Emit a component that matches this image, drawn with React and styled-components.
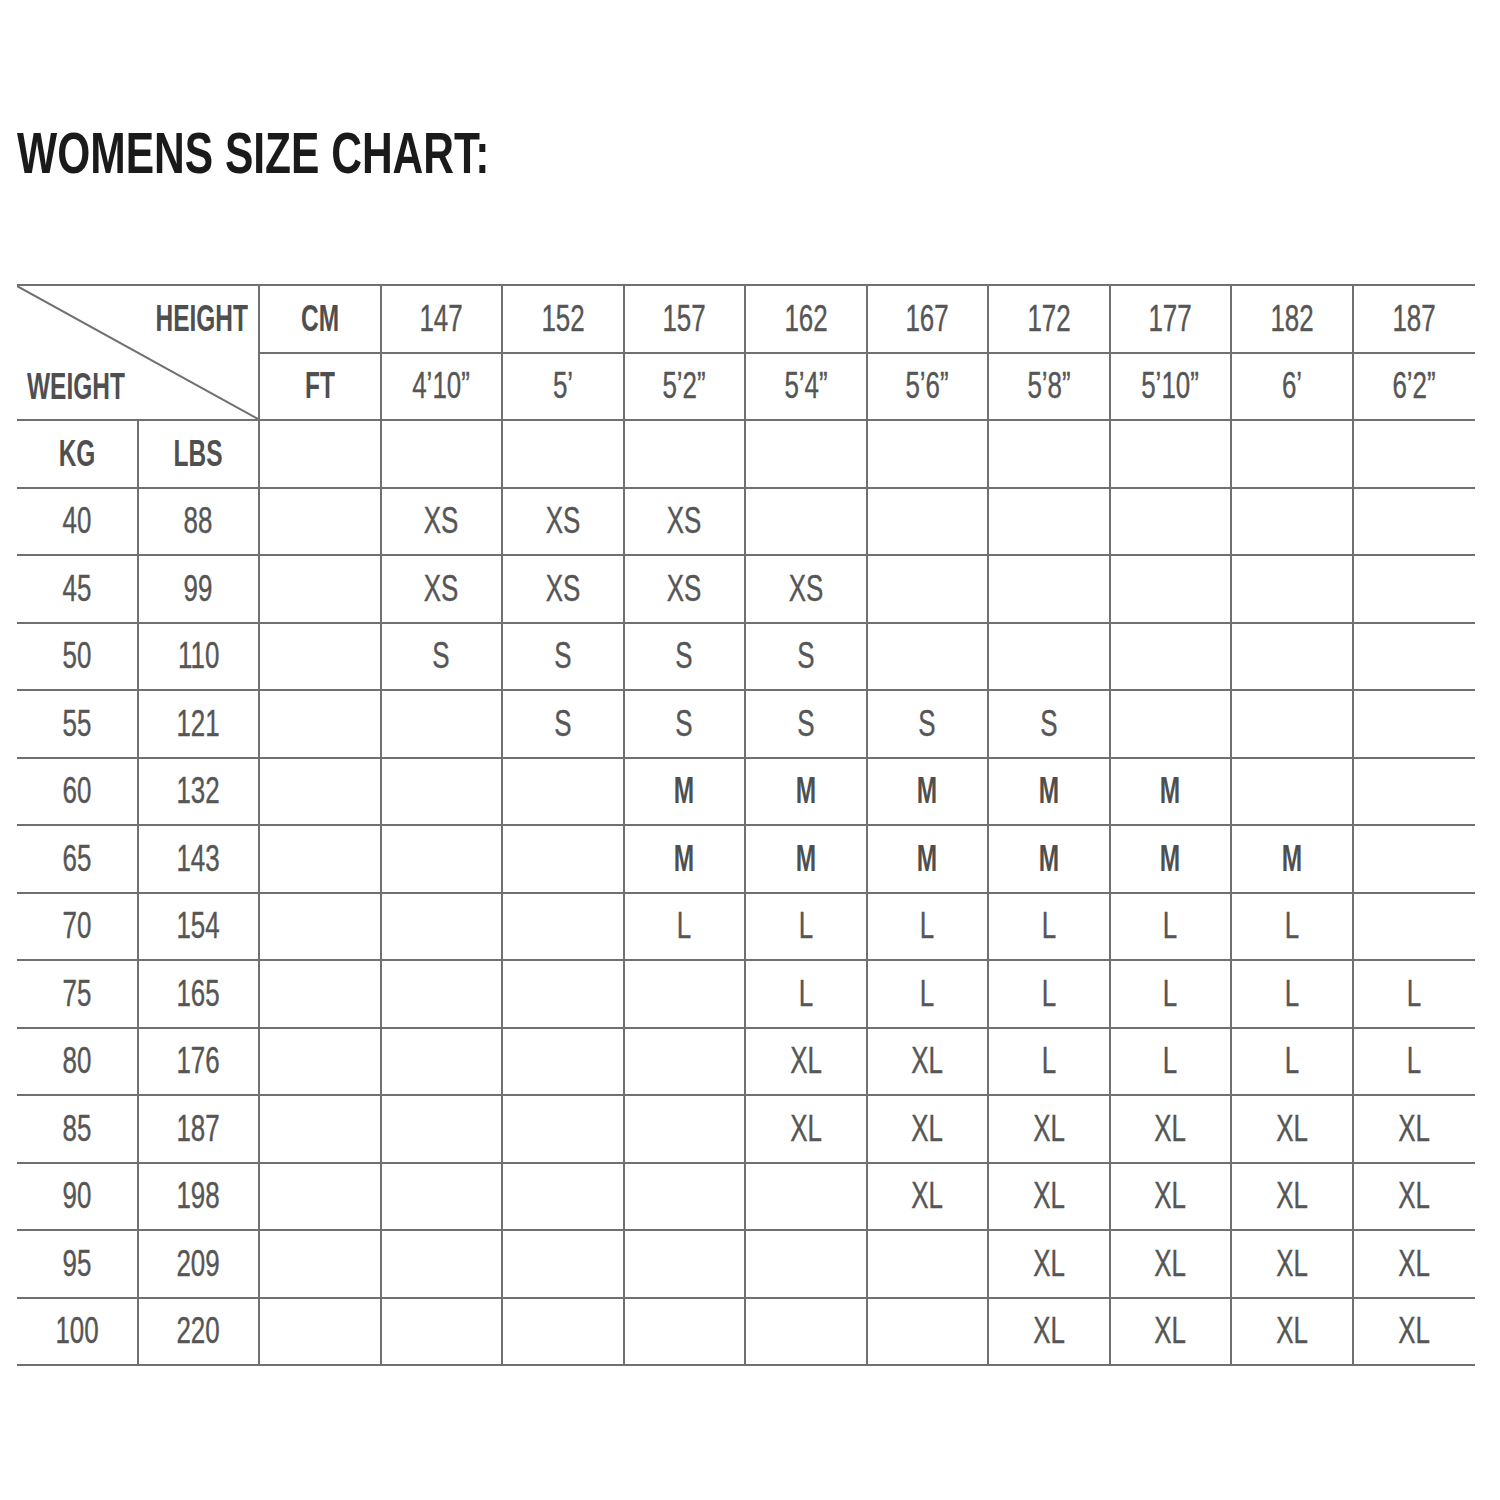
import React from "react"
import styled, { createGlobalStyle } from "styled-components"

const GlobalStyle = createGlobalStyle`
  body {
    margin: 0;
    background: #fff;
  }
`

const LINE = "#707070"

const Page = styled.div`
  padding: 125px 25px 120px 17px;
  font-family: "Liberation Sans", Arial, sans-serif;
  color: #555;
`

const Title = styled.h1`
  margin: 0;
  font-size: 57px;
  line-height: 57px;
  font-weight: 700;
  color: #1a1a1a;
  white-space: nowrap;
  transform: scaleX(0.746);
  transform-origin: left center;
`

const Chart = styled.div`
  margin-top: 102px;
  width: 1458px;
  display: grid;
  grid-template-columns: repeat(12, 1fr);
  grid-auto-rows: 67.5px;
  border-bottom: 2px solid ${LINE};
`

const Cell = styled.div`
  box-sizing: border-box;
  display: flex;
  align-items: center;
  justify-content: center;
  border-top: 2px solid ${LINE};
  border-right: ${props => (props.$last ? "none" : `2px solid ${LINE}`)};
`

const Corner = styled.div`
  position: relative;
  box-sizing: border-box;
  grid-column: span 2;
  grid-row: span 2;
  display: grid;
  grid-template-rows: 1fr 1fr;
  border-top: 2px solid ${LINE};
  border-right: 2px solid ${LINE};
  padding: 0 10px;
`

const Diagonal = styled.svg`
  position: absolute;
  inset: 0;
  width: 100%;
  height: 100%;
`

const Label = styled.span`
  display: inline-block;
  font-size: 36px;
  line-height: 1;
  font-weight: ${props => (props.$bold ? 700 : 400)};
  color: ${props => (props.$bold ? "#4f4f4f" : "#565656")};
  -webkit-text-stroke: ${props => (props.$bold ? "0" : "0.4px #565656")};
  white-space: nowrap;
  transform: scaleX(${props => (props.$bold ? 0.68 : 0.72)});
  transform-origin: ${props => props.$origin || "center"};
`

const CornerLabel = styled.div`
  display: flex;
  align-items: center;
  justify-content: ${props => (props.$end ? "flex-end" : "flex-start")};
  padding-top: ${props => (props.$end ? "0" : "3px")};
`

const cm = ["147", "152", "157", "162", "167", "172", "177", "182", "187"]
const ft = ["4’10”", "5’", "5’2”", "5’4”", "5’6”", "5’8”", "5’10”", "6’", "6’2”"]

const fill = (from, size, count, rest) => {
  const row = Array(9).fill("")
  for (let i = 0; i < count; i++) row[from + i] = size
  if (rest) rest.forEach(([i, s]) => (row[i] = s))
  return row
}

const rows = [
  ["40", "88", fill(0, "XS", 3)],
  ["45", "99", fill(0, "XS", 4)],
  ["50", "110", fill(0, "S", 4)],
  ["55", "121", fill(1, "S", 5)],
  ["60", "132", fill(2, "M", 5)],
  ["65", "143", fill(2, "M", 6)],
  ["70", "154", fill(2, "L", 6)],
  ["75", "165", fill(3, "L", 6)],
  ["80", "176", fill(3, "XL", 2, [[5, "L"], [6, "L"], [7, "L"], [8, "L"]])],
  ["85", "187", fill(3, "XL", 6)],
  ["90", "198", fill(4, "XL", 5)],
  ["95", "209", fill(5, "XL", 4)],
  ["100", "220", fill(5, "XL", 4)],
]

const Text = ({ children, bold }) =>
  children ? <Label $bold={bold}>{children}</Label> : null

const App = () => (
  <Page>
    <GlobalStyle />
    <Title>WOMENS SIZE CHART:</Title>
    <Chart>
      <Corner>
        <Diagonal viewBox="0 0 100 100" preserveAspectRatio="none">
          <line
            x1="0"
            y1="0"
            x2="100"
            y2="100"
            stroke={LINE}
            strokeWidth="2"
            vectorEffect="non-scaling-stroke"
          />
        </Diagonal>
        <CornerLabel $end>
          <Label $bold $origin="right center">HEIGHT</Label>
        </CornerLabel>
        <CornerLabel>
          <Label $bold $origin="left center">WEIGHT</Label>
        </CornerLabel>
      </Corner>
      <Cell>
        <Text bold>CM</Text>
      </Cell>
      {cm.map((v, i) => (
        <Cell key={v} $last={i === 8}>
          <Text>{v}</Text>
        </Cell>
      ))}
      <Cell>
        <Text bold>FT</Text>
      </Cell>
      {ft.map((v, i) => (
        <Cell key={v} $last={i === 8}>
          <Text>{v}</Text>
        </Cell>
      ))}
      <Cell>
        <Text bold>KG</Text>
      </Cell>
      <Cell>
        <Text bold>LBS</Text>
      </Cell>
      {Array.from({ length: 10 }, (_, i) => (
        <Cell key={i} $last={i === 9} />
      ))}
      {rows.map(([kg, lbs, sizes]) => (
        <React.Fragment key={kg}>
          <Cell>
            <Text>{kg}</Text>
          </Cell>
          <Cell>
            <Text>{lbs}</Text>
          </Cell>
          <Cell />
          {sizes.map((s, i) => (
            <Cell key={i} $last={i === 8}>
              <Text bold={s === "M"}>{s}</Text>
            </Cell>
          ))}
        </React.Fragment>
      ))}
    </Chart>
  </Page>
)

export default App
